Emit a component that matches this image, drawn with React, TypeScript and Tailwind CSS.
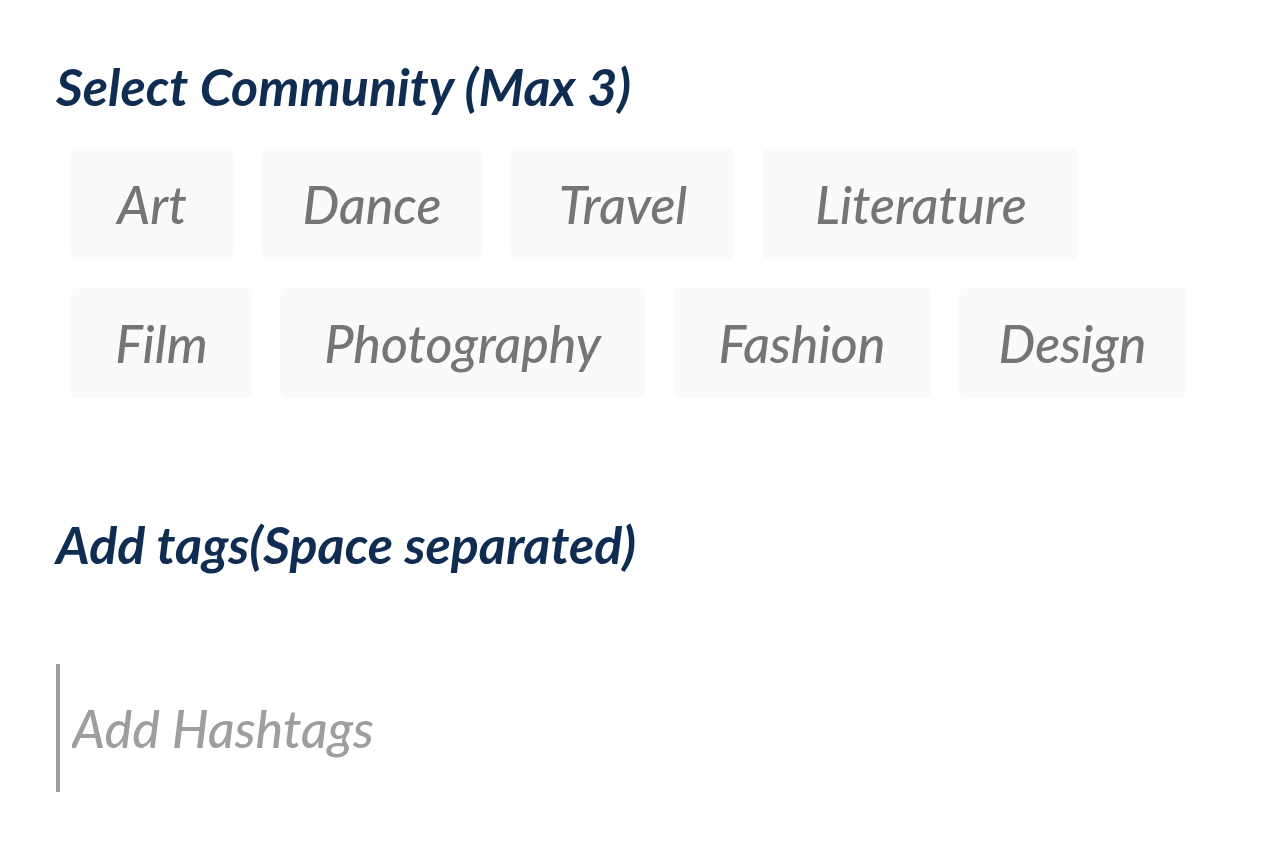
import React from "react";

const communities = [
  { name: "Art", width: "min-w-[162px]" },
  { name: "Dance", width: "min-w-[222px]" },
  { name: "Travel", width: "min-w-[224px]" },
  { name: "Literature", width: "min-w-[316px]" },
  { name: "Film", width: "min-w-[181px]" },
  { name: "Photography", width: "min-w-[365px]" },
  { name: "Fashion", width: "min-w-[258px]" },
  { name: "Design", width: "min-w-[227px]" },
];

export default function App() {
  return (
    <main className="min-h-screen bg-white px-14 pt-14 pb-[60px] font-['Lato','Open_Sans',sans-serif] italic">
      <h2 className="text-[52px] leading-[60px] font-bold text-[#0f2d52]">Select Community (Max 3)</h2>
      <div className="mt-[33px] ml-[15px] flex flex-wrap gap-x-7 gap-y-[29px]">
        {communities.map((c) => (
          <button
            key={c.name}
            type="button"
            className={`${c.width} h-[110px] rounded-md bg-[#fafafa] px-5 text-[52px] leading-[60px] font-medium text-[#757575]`}
          >
            {c.name}
          </button>
        ))}
      </div>
      <label htmlFor="tags" className="mt-[116px] block text-[52px] leading-[60px] font-bold text-[#0f2d52]">
        Add tags(Space separated)
      </label>
      <input
        id="tags"
        type="text"
        placeholder="Add Hashtags"
        className="mt-[90px] block h-32 w-full border-l-4 border-[#9e9e9e] bg-transparent pl-3 text-[52px] leading-[60px] font-medium text-[#757575] italic outline-none placeholder:text-[#9e9e9e]"
      />
    </main>
  );
}
